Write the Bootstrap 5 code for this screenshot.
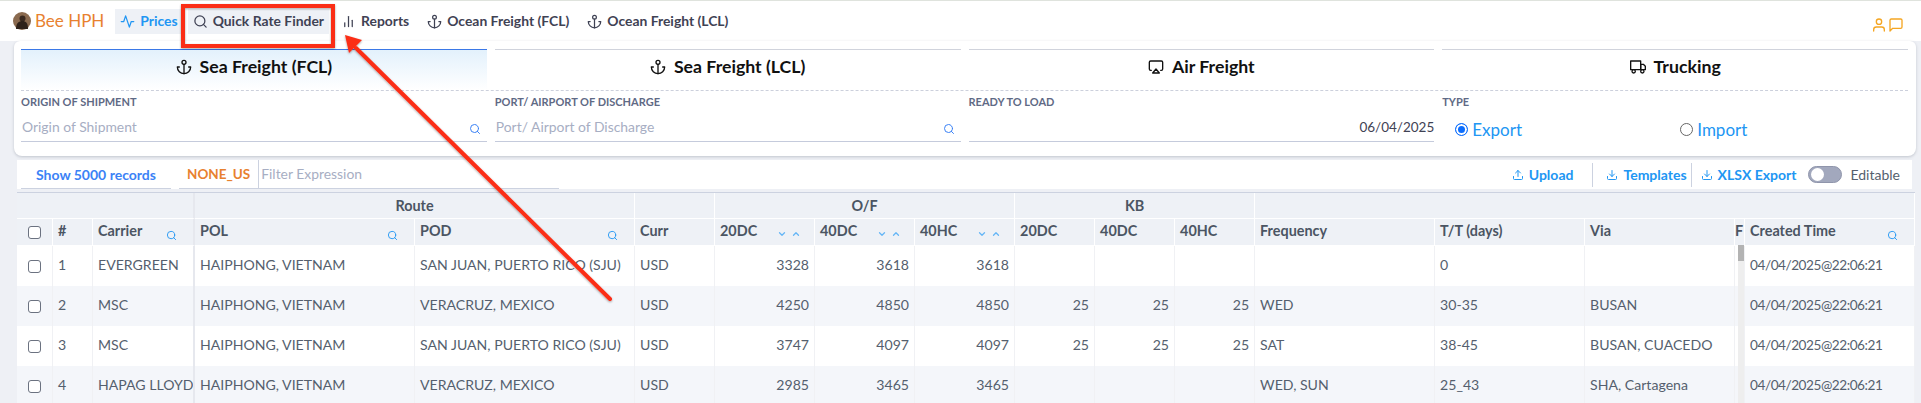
<!DOCTYPE html>
<html lang="en"><head><meta charset="utf-8"><title>Rates</title>
<link href="https://cdn.jsdelivr.net/npm/bootstrap@5.3.0/dist/css/bootstrap.min.css" rel="stylesheet">
<style>
html,body{height:100%;overflow:hidden}
body{background:#eef0f5;font-family:"Lato","Liberation Sans",sans-serif;color:#4b5563;position:relative;border-top:1px solid #dfe3dd}
.ic{width:1em;height:1em;fill:none;stroke:currentColor;stroke-width:2;stroke-linecap:round;stroke-linejoin:round;flex:none}
.topbar{height:40px;background:#fff;padding-left:13px;padding-right:17px}
.brand{color:#e8812f;font-size:17px;font-weight:400;margin-right:11px;gap:4px;white-space:nowrap}
.avatar{width:18px;height:18px;flex:none}
.navi{height:25px;font-size:13.9px;font-weight:700;color:#3f4254;gap:5px;padding:0 5px;text-decoration:none;margin-right:5px;white-space:nowrap}
.navi .ic{font-size:15px}
.navi.on{background:#eef1f6}
.navi.blue{color:#2196f3}
.navi.on:nth-of-type(2){margin-right:4px}
.navi.plain{margin-right:10px;padding:0}
.tright{color:#f5a623;font-size:16px;gap:1px;margin-top:8px}
.panel{margin:0 5px 0 13.5px;height:115px;background:#fff;border-radius:6px 6px 8px 8px;padding:8px 8px 0 7.5px;box-shadow:0 1px 3px rgba(60,70,90,.25)}
.tabrow{display:grid;grid-template-columns:repeat(4,1fr);column-gap:8px;border-bottom:1px dashed #ccd0dc;height:42px}
.tabi{border-top:1px solid #d0d3dc;height:41px;padding-bottom:6px;font-size:17.7px;font-weight:700;color:#111;gap:8px;white-space:nowrap}
.tabi .ic{font-size:16px}
.tabi.act{border-top-color:#3b78e7;background:linear-gradient(#e3f1fc,#fff)}
.fields{display:grid;grid-template-columns:repeat(4,1fr);column-gap:8px}
.lbl{font-size:11px;font-weight:700;color:#5f6a85;text-transform:uppercase;line-height:14px;margin-top:4px;white-space:nowrap}
.ctl{height:25px;margin-top:8px;padding-bottom:3px;border-bottom:1px solid #c5cbdc;font-size:13.9px;color:#a7aec3;padding-left:1px;position:relative}
.ctl .ic{position:absolute;right:6px;bottom:6px;color:#3b82f6;font-size:12px}
.ctl.date{color:#3f4254;justify-content:flex-end;font-size:13.5px}
.typ{margin-top:8px;height:25px;display:grid;grid-template-columns:225px 1fr;padding-left:13px;font-size:17px;color:#2196f3;line-height:1}
.rad{gap:4px}
.dot{width:13px;height:13px;border-radius:50%;border:1px solid #666;flex:none}
.dot.sel{border:1px solid #0d6efd;box-shadow:inset 0 0 0 2px #fff;background:#0d6efd}
.tools{margin:4px 9px 0 17px;height:29px;background:#fff;font-size:14px}
.tabx{height:29px;border-bottom:1px solid #ccd2e0;font-weight:700;color:#3b82f6;margin-left:4px;width:150px;padding-left:15px;white-space:nowrap}
.noneus{height:29px;border-bottom:1px solid #ccd2e0;margin-left:8px;width:380px;color:#e8812f;font-weight:700;padding-left:8px;font-size:13.5px}
.noneus b{font-weight:700;padding-right:8px;border-right:1px solid #ccd2e0;height:28px;display:flex;align-items:center}
.noneus i{font-style:normal;color:#a7aec3;font-weight:400;padding-left:2px;font-size:13.9px}
.act-l{color:#2196f3;font-weight:700;gap:5px;white-space:nowrap}
.act-l .ic{font-size:12px}
.vsep{width:1px;height:24px;background:#ccd2e0}
.sep-a{margin:0 13px 0 19px}
.sep-b{margin:0 9px 0 4px}
.knob{width:34px;height:17px;border-radius:9px;background:#a2a8bd;border:1px solid #8f95ab;position:relative;flex:none;margin-left:12px}
.knob::before{content:"";position:absolute;left:2px;top:1px;width:13px;height:13px;border-radius:50%;background:#fff}
.edi{margin:0 12px 0 8px;color:#555f6e}
.gridbox{margin:3px 6px 0 17px;position:relative;border-top:1px solid #ccd2e0;overflow:hidden;background:#fff}
.ratetb{table-layout:fixed;width:1898px;margin:0;font-size:14.1px;border-collapse:separate;border-spacing:0}
.ratetb th,.ratetb td{padding:0 5px 2px;vertical-align:middle;white-space:nowrap;overflow:hidden;box-shadow:none;border:0;border-right:1px solid #f0f1f4;color:#555f6e;font-weight:400}
.ratetb thead th{background:#eef1f6;color:#4b5563;font-weight:700;font-size:14.4px;border-right:1px solid #fff;border-bottom:1px solid #fff;position:relative}
.ratetb thead tr:first-child th{height:26px;text-align:center;padding-bottom:0}
.ratetb thead tr:nth-child(2) th{height:27px}
.ratetb td{height:40px}
.ratetb tbody tr:nth-child(even) td{background:#f4f6fa}
.ratetb td.num{text-align:right}
.ratetb td.dtc{font-size:13.6px;letter-spacing:-.45px}
.ratetb .froz{border-right:2px solid #e6e8ee}
.ratetb .chk{padding:0 0 0 11px}
.boxc{width:13px;height:13px;border:1px solid #6b7280;border-radius:3px;background:#fff;display:block}
.thi{position:absolute;right:16px;top:11px;color:#2196f3;font-size:11px}
.sorts{position:absolute;right:13px;top:10px;color:#64b5f6;font-size:10px;display:flex;gap:4px}
.sorts .ic{stroke-width:3}
.track{position:absolute;left:1721px;top:52px;bottom:0;width:6px;background:#eeeeee}
.thumb{display:block;height:16px;background:#b3b3b3}
.overlay{position:absolute;left:0;top:0;width:1921px;height:403px;pointer-events:none}
</style></head><body>
<svg width="0" height="0" class="d-block" style="position:absolute"><defs>
<symbol id="i-act" viewBox="0 0 24 24"><polyline points="22 12 18 12 15 21 9 3 6 12 2 12"/></symbol>
<symbol id="i-sea" viewBox="0 0 24 24"><circle cx="11" cy="11" r="8"/><line x1="21" y1="21" x2="16.65" y2="16.65"/></symbol>
<symbol id="i-bar" viewBox="0 0 24 24"><line x1="18" y1="20" x2="18" y2="10"/><line x1="12" y1="20" x2="12" y2="4"/><line x1="6" y1="20" x2="6" y2="14"/></symbol>
<symbol id="i-anc" viewBox="0 0 24 24"><circle cx="12" cy="5" r="3"/><line x1="12" y1="22" x2="12" y2="8"/><path d="M5 12H2a10 10 0 0 0 20 0h-3"/></symbol>
<symbol id="i-air" viewBox="0 0 24 24"><path d="M5 17H4a2 2 0 0 1-2-2V5a2 2 0 0 1 2-2h16a2 2 0 0 1 2 2v10a2 2 0 0 1-2 2h-1"/><polygon points="12 15 17 21 7 21 12 15"/></symbol>
<symbol id="i-trk" viewBox="0 0 24 24"><rect x="1" y="3" width="15" height="13"/><polygon points="16 8 20 8 23 11 23 16 16 16 16 8"/><circle cx="5.5" cy="18.5" r="2.5"/><circle cx="18.5" cy="18.5" r="2.5"/></symbol>
<symbol id="i-usr" viewBox="0 0 24 24"><path d="M20 21v-2a4 4 0 0 0-4-4H8a4 4 0 0 0-4 4v2"/><circle cx="12" cy="7" r="4"/></symbol>
<symbol id="i-msg" viewBox="0 0 24 24"><path d="M21 15a2 2 0 0 1-2 2H7l-4 4V5a2 2 0 0 1 2-2h14a2 2 0 0 1 2 2z"/></symbol>
<symbol id="i-up" viewBox="0 0 24 24"><path d="M21 15v4a2 2 0 0 1-2 2H5a2 2 0 0 1-2-2v-4"/><polyline points="17 8 12 3 7 8"/><line x1="12" y1="3" x2="12" y2="15"/></symbol>
<symbol id="i-dn" viewBox="0 0 24 24"><path d="M21 15v4a2 2 0 0 1-2 2H5a2 2 0 0 1-2-2v-4"/><polyline points="7 10 12 15 17 10"/><line x1="12" y1="15" x2="12" y2="3"/></symbol>
<symbol id="i-cd" viewBox="0 0 24 24"><polyline points="6 9 12 15 18 9"/></symbol>
<symbol id="i-cu" viewBox="0 0 24 24"><polyline points="18 15 12 9 6 15"/></symbol>
</defs></svg>

<nav class="topbar d-flex align-items-center">
  <span class="brand d-flex align-items-center">
    <svg class="avatar" viewBox="0 0 18 18"><circle cx="9" cy="9" r="9" fill="#8a6a4f"/><circle cx="9.5" cy="6.5" r="3" fill="#3a2a20"/><path d="M3 17c0-6 3-8 6.5-8S15 11 15 17z" fill="#2f221a"/></svg>
    Bee HPH</span>
  <a class="navi on blue d-flex align-items-center" href="#"><svg class="ic"><use href="#i-act"/></svg>Prices</a>
  <a class="navi on d-flex align-items-center" href="#"><svg class="ic"><use href="#i-sea"/></svg>Quick Rate Finder</a>
  <a class="navi plain d-flex align-items-center ms-2" href="#"><svg class="ic"><use href="#i-bar"/></svg>Reports</a>
  <a class="navi plain d-flex align-items-center ms-2" href="#"><svg class="ic"><use href="#i-anc"/></svg>Ocean Freight (FCL)</a>
  <a class="navi plain d-flex align-items-center ms-2" href="#"><svg class="ic"><use href="#i-anc"/></svg>Ocean Freight (LCL)</a>
  <span class="tright d-flex align-items-center ms-auto"><svg class="ic"><use href="#i-usr"/></svg><svg class="ic"><use href="#i-msg"/></svg></span>
</nav>

<section class="panel">
  <div class="tabrow">
    <div class="tabi act d-flex align-items-center justify-content-center"><svg class="ic"><use href="#i-anc"/></svg>Sea Freight (FCL)</div>
    <div class="tabi d-flex align-items-center justify-content-center"><svg class="ic"><use href="#i-anc"/></svg>Sea Freight (LCL)</div>
    <div class="tabi d-flex align-items-center justify-content-center"><svg class="ic"><use href="#i-air"/></svg>Air Freight</div>
    <div class="tabi d-flex align-items-center justify-content-center"><svg class="ic"><use href="#i-trk"/></svg>Trucking</div>
  </div>
  <div class="fields">
    <div><div class="lbl">Origin of Shipment</div><div class="ctl d-flex align-items-center">Origin of Shipment<svg class="ic"><use href="#i-sea"/></svg></div></div>
    <div><div class="lbl">Port/ Airport of Discharge</div><div class="ctl d-flex align-items-center">Port/ Airport of Discharge<svg class="ic"><use href="#i-sea"/></svg></div></div>
    <div><div class="lbl">Ready to Load</div><div class="ctl date d-flex align-items-center">06/04/2025</div></div>
    <div><div class="lbl">Type</div><div class="typ"><span class="rad d-flex align-items-center"><span class="dot sel"></span>Export</span><span class="rad d-flex align-items-center"><span class="dot"></span>Import</span></div></div>
  </div>
</section>

<div class="tools d-flex align-items-center">
  <div class="tabx d-flex align-items-center">Show 5000 records</div>
  <div class="noneus d-flex align-items-center"><b>NONE_US</b><i>Filter Expression</i></div>
  <div class="ms-auto d-flex align-items-center">
    <span class="act-l d-flex align-items-center"><svg class="ic"><use href="#i-up"/></svg>Upload</span>
    <span class="vsep sep-a"></span>
    <span class="act-l d-flex align-items-center"><svg class="ic"><use href="#i-dn"/></svg>Templates</span>
    <span class="vsep sep-b"></span>
    <span class="act-l d-flex align-items-center"><svg class="ic"><use href="#i-dn"/></svg>XLSX Export</span>
    <span class="knob"></span>
    <span class="edi">Editable</span>
  </div>
</div>

<div class="gridbox">
<table class="table ratetb">
<colgroup><col style="width:36px"><col style="width:40px"><col style="width:102px"><col style="width:220px"><col style="width:220px"><col style="width:80px"><col style="width:100px"><col style="width:100px"><col style="width:100px"><col style="width:80px"><col style="width:80px"><col style="width:80px"><col style="width:180px"><col style="width:150px"><col style="width:150px"><col style="width:10px"><col></colgroup>
<thead>
<tr><th colspan="3" class="froz"></th><th colspan="2">Route</th><th></th><th colspan="3">O/F</th><th colspan="3">KB</th><th colspan="5"></th></tr>
<tr><th class="chk"><span class="boxc"></span></th><th>#</th><th class="froz">Carrier<svg class="ic thi"><use href="#i-sea"/></svg></th><th>POL<svg class="ic thi"><use href="#i-sea"/></svg></th><th>POD<svg class="ic thi"><use href="#i-sea"/></svg></th><th>Curr</th>
<th>20DC<span class="sorts"><svg class="ic"><use href="#i-cd"/></svg><svg class="ic"><use href="#i-cu"/></svg></span></th><th>40DC<span class="sorts"><svg class="ic"><use href="#i-cd"/></svg><svg class="ic"><use href="#i-cu"/></svg></span></th><th>40HC<span class="sorts"><svg class="ic"><use href="#i-cd"/></svg><svg class="ic"><use href="#i-cu"/></svg></span></th>
<th>20DC</th><th>40DC</th><th>40HC</th><th>Frequency</th><th>T/T (days)</th><th>Via</th><th class="px-0">F</th><th>Created Time<svg class="ic thi"><use href="#i-sea"/></svg></th></tr>
</thead>
<tbody>
<tr><td class="chk"><span class="boxc"></span></td><td>1</td><td class="froz">EVERGREEN</td><td>HAIPHONG, VIETNAM</td><td>SAN JUAN, PUERTO RICO (SJU)</td><td>USD</td><td class="num">3328</td><td class="num">3618</td><td class="num">3618</td><td></td><td></td><td></td><td></td><td>0</td><td></td><td></td><td class="dtc">04/04/2025@22:06:21</td></tr>
<tr><td class="chk"><span class="boxc"></span></td><td>2</td><td class="froz">MSC</td><td>HAIPHONG, VIETNAM</td><td>VERACRUZ, MEXICO</td><td>USD</td><td class="num">4250</td><td class="num">4850</td><td class="num">4850</td><td class="num">25</td><td class="num">25</td><td class="num">25</td><td>WED</td><td>30-35</td><td>BUSAN</td><td></td><td class="dtc">04/04/2025@22:06:21</td></tr>
<tr><td class="chk"><span class="boxc"></span></td><td>3</td><td class="froz">MSC</td><td>HAIPHONG, VIETNAM</td><td>SAN JUAN, PUERTO RICO (SJU)</td><td>USD</td><td class="num">3747</td><td class="num">4097</td><td class="num">4097</td><td class="num">25</td><td class="num">25</td><td class="num">25</td><td>SAT</td><td>38-45</td><td>BUSAN, CUACEDO</td><td></td><td class="dtc">04/04/2025@22:06:21</td></tr>
<tr><td class="chk"><span class="boxc"></span></td><td>4</td><td class="froz">HAPAG LLOYD</td><td>HAIPHONG, VIETNAM</td><td>VERACRUZ, MEXICO</td><td>USD</td><td class="num">2985</td><td class="num">3465</td><td class="num">3465</td><td></td><td></td><td></td><td>WED, SUN</td><td>25_43</td><td>SHA, Cartagena</td><td></td><td class="dtc">04/04/2025@22:06:21</td></tr>
</tbody></table>
<div class="track"><span class="thumb"></span></div>
</div>

<svg class="overlay" viewBox="0 0 1921 403">
  <defs><filter id="sh" x="-10%" y="-10%" width="120%" height="120%"><feDropShadow dx="0" dy="1" stdDeviation="1.2" flood-color="#000" flood-opacity=".35"/></filter></defs>
  <rect x="183" y="5" width="150" height="40" fill="none" stroke="#fb2d17" stroke-width="4" filter="url(#sh)"/>
  <g filter="url(#sh)"><line x1="610" y1="298" x2="356" y2="47" stroke="#fb2d17" stroke-width="4" stroke-linecap="round"/><polygon points="345,34 362,39 349,52" fill="#fb2d17"/></g>
</svg>
<script src="https://cdn.jsdelivr.net/npm/bootstrap@5.3.0/dist/js/bootstrap.bundle.min.js"></script>
</body></html>
